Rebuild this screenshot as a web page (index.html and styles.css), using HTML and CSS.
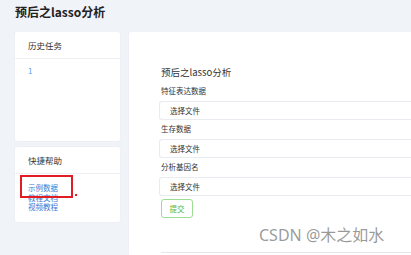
FILE: index.html
```html
<!DOCTYPE html>
<html lang="zh-CN">
<head>
  <meta charset="UTF-8">
  <title>预后之lasso分析</title>
  <link rel="stylesheet" href="styles.css">
</head>
<body>

  <h1 class="page-title">预后之lasso分析</h1>

  <div class="layout">
    <!-- Sidebar -->
    <div class="sidebar">
      <div class="card history">
        <div class="card-header">历史任务</div>
        <div class="card-body">
          <a class="task-link" href="#">1</a>
        </div>
      </div>

      <div class="card help">
        <div class="card-header">快捷帮助</div>
        <div class="card-body links">
          <a href="#">示例数据</a>
          <a href="#">教程文档</a>
          <a href="#">视频教程</a>
          <span class="mark-box"></span>
          <span class="mark-dot"></span>
        </div>
      </div>
    </div>

    <!-- Main form -->
    <div class="card main">
      <div class="form-title">预后之lasso分析</div>

      <div class="field">
        <label>特征表达数据</label>
        <div class="file-input">选择文件</div>
      </div>
      <div class="field">
        <label>生存数据</label>
        <div class="file-input">选择文件</div>
      </div>
      <div class="field">
        <label>分析基因名</label>
        <div class="file-input">选择文件</div>
      </div>

      <button class="submit">提交</button>

      <div class="result-line"></div>
    </div>
  </div>

  <div class="watermark">CSDN @木之如水</div>

</body>
</html>
```

FILE: styles.css
```css
body {
  margin: 0;
  background: #f0f3f8;
  font-family: "Noto Sans CJK SC", "Noto Sans", sans-serif;
  color: #333;
  overflow: hidden;
  position: relative;
  height: 255px;
}

.page-title {
  margin: 0;
  padding: 4px 0 0 15px;
  height: 28px;
  font-size: 12px;
  line-height: 16px;
  font-weight: bold;
  color: #222;
}

.layout {
  display: flex;
  gap: 9px;
  padding-left: 15px;
  height: 223px;
  overflow: hidden;
}

.sidebar {
  width: 105px;
  flex-shrink: 0;
  display: flex;
  flex-direction: column;
  gap: 6px;
}

.card {
  background: #fff;
  border-radius: 2px;
  box-shadow: 0 0 2px rgba(0, 0, 0, 0.06);
}

.card-header {
  height: 26px;
  line-height: 26px;
  padding-left: 13px;
  font-size: 8.5px;
  color: #333;
  border-bottom: 1px solid #eef0f4;
}

.card-body {
  font-size: 8px;
  line-height: 12px;
}

.history {
  height: 109px;
}

.history .card-body {
  padding: 6px 0 0 13px;
}

.task-link {
  color: #5b9df2;
  text-decoration: none;
}

.links {
  position: relative;
  display: flex;
  flex-direction: column;
  padding: 9px 0 10px 13px;
}

.links a {
  font-size: 7.5px;
  line-height: 9.5px;
  color: #3a78d6;
  text-decoration: none;
}

.mark-box {
  position: absolute;
  left: 5px;
  top: 1px;
  width: 49px;
  height: 19px;
  border: 2px solid #e21c24;
}

.mark-dot {
  position: absolute;
  left: 60px;
  top: 20px;
  width: 2px;
  height: 2px;
  background: #e21c24;
}

/* Main form card */
.main {
  flex: 1;
  padding: 34px 0 0 32px;
  border-radius: 2px 0 0 0;
}

.form-title {
  font-size: 9.5px;
  line-height: 13px;
  margin-bottom: 6px;
  color: #333;
}

.field label {
  display: block;
  font-size: 7.5px;
  line-height: 12px;
  margin-bottom: 4px;
  color: #333;
}

.field {
  margin-bottom: 3px;
}

.file-input {
  height: 19px;
  box-sizing: border-box;
  margin-left: -2px;
  padding-left: 10px;
  border: 1px solid #e8ebf0;
  border-right: none;
  border-radius: 3px 0 0 3px;
  font-size: 7.5px;
  line-height: 17px;
  color: #333;
}

.submit {
  display: block;
  width: 32px;
  height: 19px;
  padding: 0;
  background: #fff;
  border: 1px solid #9ddc94;
  border-radius: 3px;
  font-family: inherit;
  font-size: 7.5px;
  color: #4cba4c;
  cursor: pointer;
}

.result-line {
  margin-top: 34px;
  height: 1px;
  background: #e3e6eb;
}

.watermark {
  position: absolute;
  left: 259px;
  top: 225px;
  font-family: "Noto Sans", "Noto Sans CJK SC", sans-serif;
  font-size: 16px;
  line-height: 20px;
  color: rgba(120, 120, 120, 0.75);
  white-space: nowrap;
}
```
